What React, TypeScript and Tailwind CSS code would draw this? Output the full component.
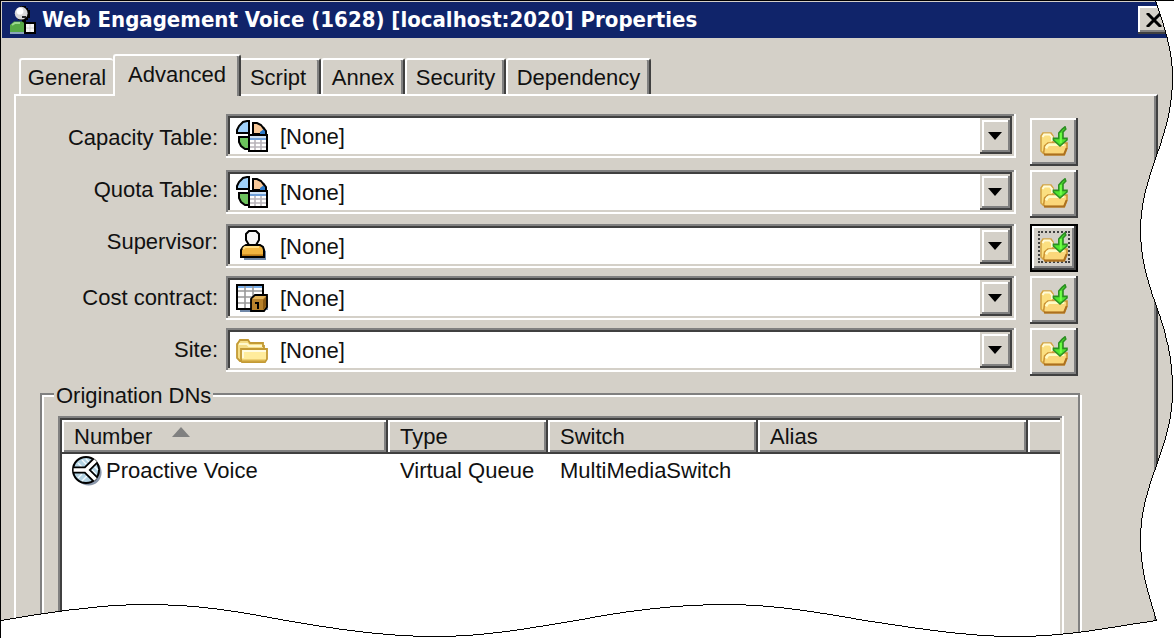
import React from 'react';
import clsx from 'clsx';

const raised = 'bg-[#d4d0c8] shadow-[inset_-2px_-2px_0_#404040,inset_2px_2px_0_#fff,inset_-4px_-4px_0_#808080]';
const sunken =
  'bg-white shadow-[inset_-2px_-2px_0_#fff,inset_2px_2px_0_#808080,inset_-4px_-4px_0_#d4d0c8,inset_4px_4px_0_#404040]';

const AgentIcon = () => (
  <svg viewBox="0 0 13 14" className="w-[26px] h-7 shrink-0" aria-hidden="true">
    <path d="M4 1h1V0h3v1h1v1h1v4H9v1H8v2H6V7H4z" fill="#000" />
    <circle cx="5.6" cy="3.6" r="3.2" fill="#d8d8d8" />
    <circle cx="5" cy="2.6" r="1.7" fill="#fff" />
    <path d="M6 5h2v1H6z" fill="#222" />
    <path d="M0 13V9.500l2-1.800h4l2 1.300v4z" fill="#55a845" />
    <path d="M1 9.500l1.500-1H5" stroke="#9bd78d" fill="none" />
    <path d="M0 13.500h8" stroke="#8ba6bd" />
    <rect x="7.500" y="8.500" width="5" height="5" fill="#f4f4f4" stroke="#000" />
    <path d="M10 9v4M8 11h4" stroke="#c8c8c8" strokeWidth=".4" />
  </svg>
);

const TableIcon = () => (
  <svg viewBox="0 0 16 16" className="size-8" aria-hidden="true">
    <path d="M.5 6.500V5l1-2 2-2 2-.500h1v6z" fill="#9fd0fa" stroke="#000" />
    <path d="M8.500 7V1.500h2l2 1 1.500 2V7z" fill="#f8c898" stroke="#000" />
    <path d="M14 4.500L15.500 7v1H12V6z" fill="#2b78c8" />
    <path d="M13.500 3.500l1.500 2V8" fill="none" stroke="#000" />
    <path d="M6.500 8.500h-5V11l1 2 2 1.500h2z" fill="#6cc25c" stroke="#000" />
    <rect x="6.500" y="7.500" width="9" height="8" fill="#fff" stroke="#000" />
    <path d="M7 8.500h8" stroke="#cfe2f6" />
    <path d="M7 9.500h8" stroke="#6f9fd8" />
    <path d="M7 11.500h8M7 13.500h8M9.500 10v5M12.500 10v5" stroke="#b8b4ba" strokeWidth=".8" />
  </svg>
);

const PersonIcon = () => (
  <svg viewBox="0 0 16 16" className="size-8" aria-hidden="true">
    <path d="M13.500 9.500l1.500 1V15H4v-1h9.500z" fill="#6f87a6" />
    <path d="M2.500 13.500V10l1-1.500 1.500-1h7l1.500 1 .5 1.500v3.500z" fill="#f0b440" stroke="#000" />
    <path d="M3.500 9.500l1-1h7" stroke="#ffdc80" fill="none" />
    <path d="M3 12.600h10.500" stroke="#b87818" strokeWidth=".8" />
    <path d="M6.500.5h3.500l1.500 1.500v3L10 7.500H6.500L5 5V2z" fill="#f6f6f6" stroke="#000" />
  </svg>
);

const ContractIcon = () => (
  <svg viewBox="0 0 16 16" className="size-8" aria-hidden="true">
    <path d="M2 14h7v1H2zM15 7h1v7h-1z" fill="#7088a8" />
    <rect x=".5" y="1.500" width="13" height="12" fill="#fff" stroke="#000" />
    <path d="M1 2.500h12" stroke="#7ab0ea" />
    <path d="M1 4.500h12M1 7.500h12M1 10.500h12M4.500 2v11M8.500 2v11" stroke="#999" strokeWidth=".8" />
    <path d="M7.500 8.500l2-2h6v6l-1.500 2H7.500z" fill="#b8822c" stroke="#000" strokeWidth=".9" />
    <path d="M8 8.500l1.700-1.500H15l-1.500 1.500z" fill="#e3b45a" />
    <path d="M13.500 9v5l1.500-2V7.500z" fill="#8a5a14" />
    <path d="M9.500 10.500h1.500v3" fill="none" stroke="#000" />
  </svg>
);

const FolderIcon = () => (
  <svg viewBox="0 0 16 16" className="size-8" aria-hidden="true">
    <path d="M1 4.500l1-1.500h4l1 1.500h6.500V6H14v7.500H2L.5 12V5z" fill="#f5dd86" stroke="#c39a35" strokeWidth=".9" />
    <path d="M1.500 5h4l1 1H13" stroke="#fff8cc" fill="none" />
    <path d="M2.500 7.500h13v5l-1 1.500H3l-.5-1.500z" fill="#ffec9c" stroke="#c39a35" strokeWidth=".9" />
    <path d="M3.500 12V8.500H15" stroke="#fffbe0" fill="none" strokeWidth=".9" />
    <path d="M3 13.200h11.500" stroke="#dcb650" strokeWidth=".9" />
  </svg>
);

const OpenFolderIcon = () => (
  <svg viewBox="0 0 14 15" className="w-7 h-[30px]" aria-hidden="true">
    <path d="M.5 12.500V5L1.500 3.500h4L6.500 5v4L3 13.500H1.500z" fill="#fbdf80" stroke="#d2a444" strokeWidth=".8" />
    <path d="M1.300 5.500l.8-1.300h2.800l1.100 1.300v2" stroke="#fffbd8" fill="none" />
    <path d="M1.800 13.500L2.300 10l1.700-1.500h9.500v2.500l-1.300 3.300H2.500z" fill="#fbd77a" stroke="#cc9434" strokeWidth=".8" />
    <path d="M3 11.200l.6-1.200 1-.7h7.600" stroke="#fffac4" fill="none" strokeWidth="1.300" />
    <path d="M2 14.300h10l1.300-3.300" stroke="#ac701f" fill="none" />
    <path d="M12.500.4l-1.500 1.300L9.400 3.500V6.200H6.700v.8L10 10l3.500-3V6.200h-2V3l1.400-1.500z" fill="#4fe62f" stroke="#2c8e22" strokeWidth=".8" />
    <path d="M10.400 3.500V8.500" stroke="#72ff48" />
  </svg>
);

const QueueIcon = () => (
  <svg viewBox="0 0 15 15" className="size-[30px] shrink-0" aria-hidden="true">
    <circle cx="8.300" cy="8.300" r="6.500" fill="#8a97ab" />
    <circle cx="7" cy="7" r="6.500" fill="#b4d4e4" stroke="#000" />
    <path d="M3 3.500l2 2M5 2l2.500 2.500M3 11l2-2M5 12.500L7.500 10M11 5l2 2M10 7l2 2M7 1.500L9 3.500" stroke="#f4fbff" strokeWidth=".7" />
    <path d="M1 7h6.500M11.500 2.500L7 7l4.500 4.500" stroke="#000" strokeWidth="3.600" fill="none" />
    <path d="M.8 7h6.700M11.800 2.200L7 7l4.800 4.800" stroke="#fff" strokeWidth="1.800" fill="none" />
  </svg>
);

const tabs = [
  { name: 'General', width: 'w-[94px]' },
  { name: 'Advanced', width: 'w-32' },
  { name: 'Script', width: 'w-[86px] -ml-1.5' },
  { name: 'Annex', width: 'w-[84px]' },
  { name: 'Security', width: 'w-[101px]' },
  { name: 'Dependency', width: 'w-[145px]' },
];

const fields = [
  { id: 'capacity', label: 'Capacity Table:', Icon: TableIcon, row: 'h-14', labelLine: 'leading-12', browse: 'self-center' },
  { id: 'quota', label: 'Quota Table:', Icon: TableIcon, row: 'h-[54px]', labelLine: 'leading-10' },
  { id: 'supervisor', label: 'Supervisor:', Icon: PersonIcon, row: 'h-13', labelLine: 'leading-9', focused: true },
  { id: 'contract', label: 'Cost contract:', Icon: ContractIcon, row: 'h-13', labelLine: 'leading-11' },
  { id: 'site', label: 'Site:', Icon: FolderIcon, row: 'h-13', labelLine: 'leading-11' },
];

const columns = [
  { name: 'Number', width: 'w-[326px]' },
  { name: 'Type', width: 'w-40' },
  { name: 'Switch', width: 'w-[210px]' },
  { name: 'Alias', width: 'w-[270px]' },
];

const TitleBar = () => (
  <header className="flex items-center h-9 pl-2 pr-1 bg-[#10246a] text-white">
    <AgentIcon />
    <h1 className="flex-1 ml-1.5 font-['DejaVu_Sans_Condensed','DejaVu_Sans',sans-serif] font-bold text-[22px] leading-9 whitespace-nowrap">
      Web Engagement Voice (1628) [localhost:2020] Properties
    </h1>
    <button aria-label="Close" className={clsx('flex items-center justify-center w-8 h-7', raised)}>
      <svg viewBox="0 0 16 14" className="w-4 h-3.5" aria-hidden="true">
        <path d="M1 0l14 14M15 0L1 14" stroke="#000" strokeWidth="3" />
      </svg>
    </button>
  </header>
);

const Tabs = () => (
  <div role="tablist" className="flex items-end h-14 pl-[18px]">
    {tabs.map(({ name, width }) => {
      const active = name === 'Advanced';
      return (
        <button
          key={name}
          role="tab"
          aria-selected={active}
          className={clsx(
            'rounded-t-[3px] border-t-2 border-l-2 border-t-white border-l-white bg-[#d4d0c8]',
            width,
            active ? 'relative h-[42px] -mb-0.5 pb-1' : 'h-9',
            name !== 'General' && 'border-r-2 border-r-[#404040] shadow-[inset_-2px_0_0_#808080]',
          )}
        >
          {name}
        </button>
      );
    })}
  </div>
);

const FieldRow = ({ id, label, Icon, row, labelLine, browse, focused }: (typeof fields)[number]) => (
  <div className={clsx('flex items-start', row)}>
    <label htmlFor={id} className={clsx('w-[178px] mr-2 text-right', labelLine)}>
      {label}
    </label>
    <div className={clsx('flex-1 grid items-center h-11 p-1', sunken)}>
      <select id={id} className="col-start-1 row-start-1 w-full h-9 pl-[50px] appearance-none outline-none bg-transparent">
        <option>[None]</option>
      </select>
      <div className="col-start-1 row-start-1 flex items-center justify-between h-9 pl-1.5 pointer-events-none">
        <Icon />
        <span className="flex items-center justify-center w-8 h-9 pr-0.5 bg-[#d4d0c8] shadow-[inset_-2px_-2px_0_#404040,inset_2px_2px_0_#d4d0c8,inset_-4px_-4px_0_#808080,inset_4px_4px_0_#fff]">
          <svg viewBox="0 0 14 8" className="w-3.5 h-2" aria-hidden="true">
            <path d="M0 0h14L7 8z" />
          </svg>
        </span>
      </div>
    </div>
    <button
      aria-label={`Browse ${label}`}
      className={clsx(
        'flex items-center justify-center size-12 ml-3.5 pb-0.5',
        browse,
        focused
          ? 'bg-[#d4d0c8] border-2 border-black shadow-[inset_-2px_-2px_0_#404040,inset_2px_2px_0_#fff,inset_-4px_-4px_0_#808080]'
          : raised,
      )}
    >
      <span className={clsx('flex items-center justify-center size-8', focused && 'border-2 border-dotted border-[#404040]')}>
        <OpenFolderIcon />
      </span>
    </button>
  </div>
);

const OriginationList = () => (
  <div className="flex-1 min-h-[222px] mt-2 ml-4 mr-3.5 pt-1 px-1 bg-white shadow-[inset_-2px_0_0_#fff,inset_2px_2px_0_#808080,inset_-4px_0_0_#d4d0c8,inset_4px_4px_0_#404040]">
    <table className="w-full table-fixed text-left">
      <thead>
        <tr className="h-[34px]">
          {columns.map(({ name, width }) => (
            <th key={name} className={clsx('p-0 pl-3 font-normal leading-8', width, raised)}>
              {name}
              {name === 'Number' && (
                <svg viewBox="0 0 18 10" className="inline w-[18px] h-2.5 ml-5 mb-3" aria-hidden="true">
                  <path d="M9 0l9 10H0z" fill="#808080" />
                </svg>
              )}
            </th>
          ))}
          <th className="p-0 bg-[#d4d0c8] shadow-[inset_0_-2px_0_#404040,inset_2px_2px_0_#fff,inset_0_-4px_0_#808080]" />
        </tr>
      </thead>
      <tbody>
        <tr className="h-8">
          <td className="p-0 pl-2.5">
            <span className="flex items-center">
              <QueueIcon />
              <span className="ml-1">Proactive Voice</span>
            </span>
          </td>
          <td className="p-0 pl-3">Virtual Queue</td>
          <td className="p-0 pl-3">MultiMediaSwitch</td>
          <td />
          <td />
        </tr>
      </tbody>
    </table>
  </div>
);

// Wavy cut along the right and bottom of the window
const TornEdge = () => (
  <svg
    viewBox="0 0 1174 638"
    preserveAspectRatio="none"
    className="absolute inset-0 size-full pointer-events-none"
    aria-hidden="true"
  >
    <path
      d="M1155.500 0C1164 24 1172.500 50 1172.500 76C1172.500 106 1166 128 1156.500 155C1147 182 1140.500 204 1140.500 230C1140.500 256 1147 280 1156.500 306C1166 332 1172.500 356 1172.500 390C1172.500 418 1166 438 1156.500 465C1147 492 1140.500 512 1140.500 540C1140.500 568 1147 590 1156.500 620.500C1110 627 1070 636.500 1015 636.500C965 636.500 915 628 865 620.500C815 612 775 604.500 725 604.500C670 604.500 620 612 575 620.500C530 628 485 636.500 435 636.500C380 636.500 330 628 285 620.500C240 612 200 604.500 145 604.500C95 604.500 45 613 -.5 620.500H-2V640H1176V-2H1155z"
      fill="#fff"
    />
    <path
      d="M1155.500 0C1164 24 1172.500 50 1172.500 76C1172.500 106 1166 128 1156.500 155C1147 182 1140.500 204 1140.500 230C1140.500 256 1147 280 1156.500 306C1166 332 1172.500 356 1172.500 390C1172.500 418 1166 438 1156.500 465C1147 492 1140.500 512 1140.500 540C1140.500 568 1147 590 1156.500 620.500C1110 627 1070 636.500 1015 636.500C965 636.500 915 628 865 620.500C815 612 775 604.500 725 604.500C670 604.500 620 612 575 620.500C530 628 485 636.500 435 636.500C380 636.500 330 628 285 620.500C240 612 200 604.500 145 604.500C95 604.500 45 613 -.5 620.500"
      fill="none"
      stroke="#000"
      shapeRendering="crispEdges"
    />
  </svg>
);

const App = () => {
  return (
    <main className="relative flex flex-col min-h-screen overflow-hidden border-t border-l border-black bg-[#d4d0c8] pt-px font-['Liberation_Sans',sans-serif] text-[22px] text-[#111]">
      <div className="ml-px">
        <TitleBar />
      </div>
      <Tabs />
      <div className="flex-1 flex flex-col ml-[13px] mr-4 pt-[18px] pl-6 pr-[76px] border-t-2 border-l-2 border-r-2 border-t-white border-l-white border-r-[#404040] shadow-[inset_-2px_0_0_#808080]">
        <div className="pr-0.5">
          {fields.map((field) => (
            <FieldRow key={field.id} {...field} />
          ))}
        </div>
        <fieldset className="flex-1 flex flex-col border-2 border-b-0 border-[#808080] shadow-[2px_2px_0_#fff,inset_2px_2px_0_#fff]">
          <legend className="ml-3 px-0.5 pt-1 leading-6 bg-[#d4d0c8]">Origination DNs</legend>
          <OriginationList />
        </fieldset>
      </div>
      <TornEdge />
    </main>
  );
};

export default App;
